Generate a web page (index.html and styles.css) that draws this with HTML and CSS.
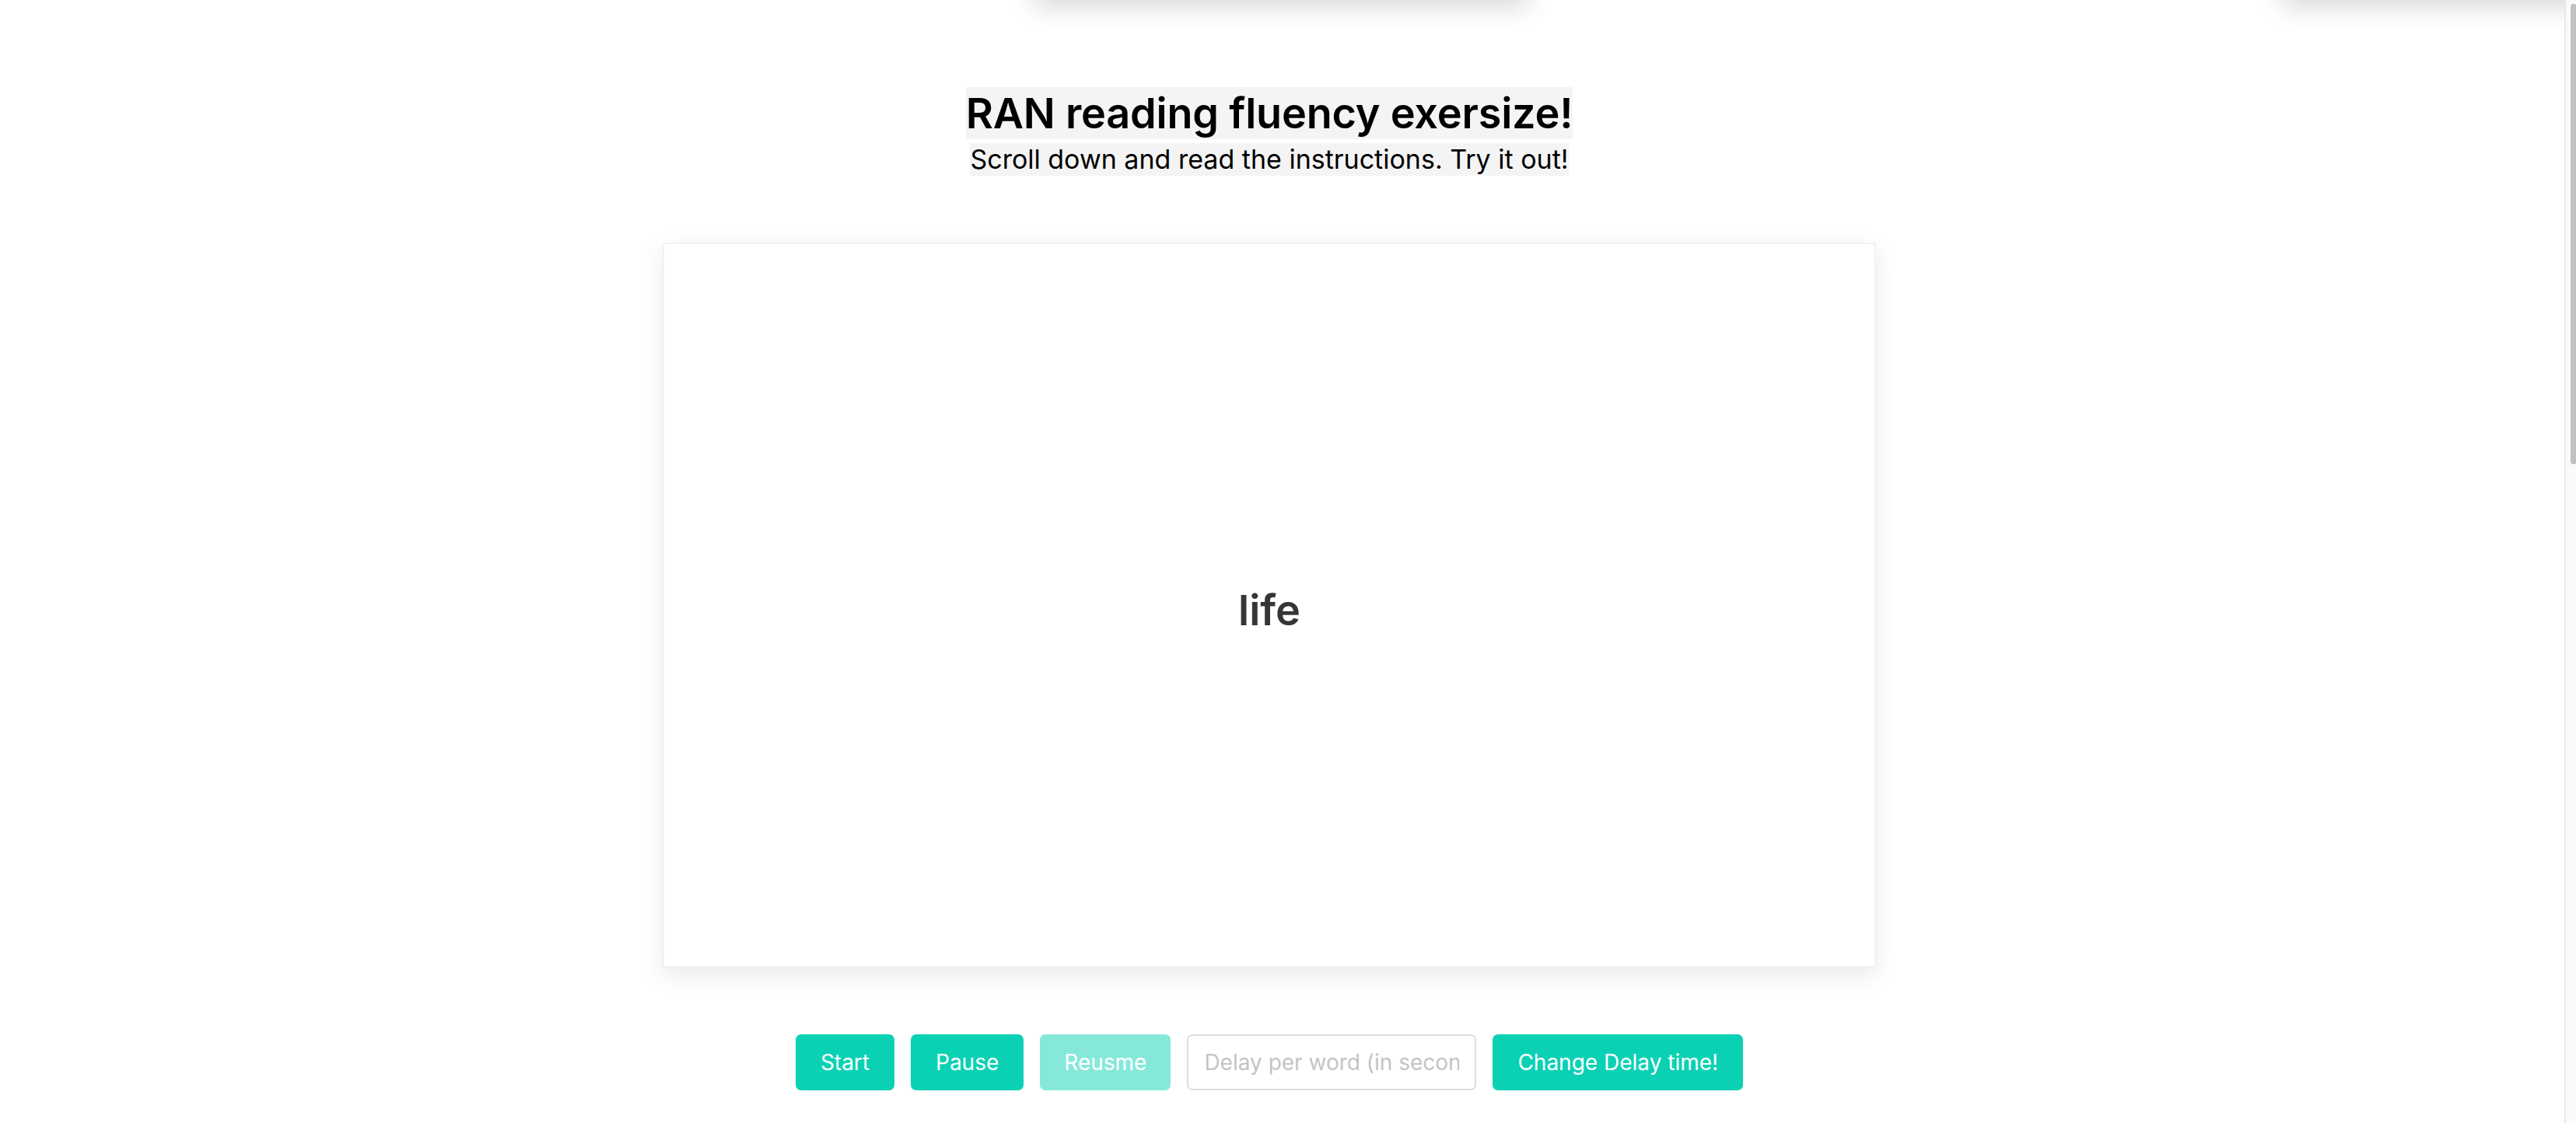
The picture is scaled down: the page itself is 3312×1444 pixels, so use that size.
FILE: index.html
```html
<!DOCTYPE html>
<html lang="en">
<head>
<meta charset="utf-8">
<title>RAN reading fluency exersize</title>
<link rel="stylesheet" href="styles.css">
</head>
<body>
<div class="ghost ghost-left"></div>
<div class="ghost ghost-right"></div>
<main class="page">
  <header class="intro">
    <h1 class="title">RAN reading fluency exersize!</h1>
    <p class="subtitle">Scroll down and read the instructions. Try it out!</p>
  </header>
  <section class="card">
    <span class="word">life</span>
  </section>
  <div class="controls">
    <button class="btn">Start</button>
    <button class="btn">Pause</button>
    <button class="btn btn-disabled" disabled>Reusme</button>
    <input class="delay" type="text" placeholder="Delay per word (in seconds)">
    <button class="btn">Change Delay time!</button>
  </div>
</main>
<div class="scrollbar"><div class="thumb"></div></div>
</body>
</html>
```

FILE: styles.css
```css
html, body {
  margin: 0;
  padding: 0;
  height: 100%;
  overflow: hidden;
  background: #ffffff;
}

body {
  font-family: Inter, "Noto Sans", "Liberation Sans", sans-serif;
  color: #000;
  position: relative;
}

.ghost {
  position: absolute;
  top: -200px;
  height: 200px;
  background: #fff;
  box-shadow: 0 8px 32px rgba(0, 0, 0, 0.16);
}

.ghost-left {
  left: 1330px;
  width: 634px;
}

.ghost-right {
  left: 2935px;
  width: 500px;
}

.page {
  width: 3264px;
  padding-top: 112px;
  display: flex;
  flex-direction: column;
  align-items: center;
}

.intro {
  display: flex;
  flex-direction: column;
  align-items: center;
}

.title {
  margin: 0;
  font-size: 54px;
  font-weight: 600;
  line-height: 67px;
  letter-spacing: -0.2px;
  background: #f4f4f4;
}

.subtitle {
  margin: 5px 0 0;
  font-size: 34px;
  font-weight: 400;
  line-height: 42px;
  background: #f4f4f4;
}

.card {
  margin-top: 86px;
  width: 1556px;
  height: 928px;
  border: 2px solid #f2f2f2;
  background: #fff;
  box-shadow: 0 10px 30px rgba(0, 0, 0, 0.09);
  display: flex;
  align-items: center;
  justify-content: center;
}

.word {
  font-size: 54px;
  font-weight: 600;
  color: #363636;
  margin-top: 12px;
}

.controls {
  margin-top: 86px;
  display: flex;
  align-items: center;
  gap: 21px;
}

.btn {
  height: 72px;
  padding: 0 32px;
  border: none;
  border-radius: 7px;
  background: #0bd1b4;
  color: #fff;
  font-family: Inter, "Noto Sans", "Liberation Sans", sans-serif;
  font-size: 28px;
  font-weight: 400;
}

.btn-disabled {
  background: #86e8d9;
  padding: 0 31px;
}

.delay {
  box-sizing: border-box;
  width: 372px;
  height: 72px;
  padding: 0 20px;
  border: 2px solid #dedede;
  border-radius: 7px;
  font-family: Inter, "Noto Sans", "Liberation Sans", sans-serif;
  font-size: 28px;
  color: #333;
  outline: none;
}

.delay::placeholder {
  color: #c4c4c4;
}

.scrollbar {
  position: fixed;
  top: 0;
  right: 0;
  width: 13px;
  height: 100%;
  background: #fafafa;
  border-left: 2px solid #e8e8e8;
}

.thumb {
  position: absolute;
  top: 5px;
  left: 6px;
  width: 8px;
  height: 592px;
  border-radius: 5px;
  background: #c1c1c1;
}
```
